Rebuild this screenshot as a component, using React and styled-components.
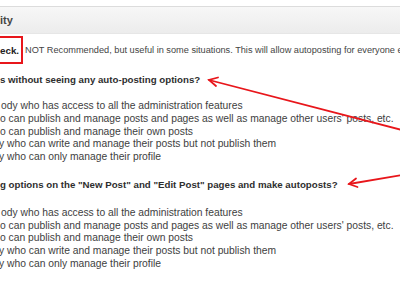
import React from "react"
import styled, { createGlobalStyle } from "styled-components"

const GlobalStyle = createGlobalStyle`
  html, body {
    margin: 0;
    padding: 0;
    background: #fff;
    overflow: hidden;
  }
  body {
    font-family: "Liberation Sans", Arial, sans-serif;
  }
`

const Page = styled.div`
  position: relative;
  width: 400px;
  height: 284px;
  overflow: hidden;
  padding-top: 6px;
  box-sizing: border-box;
`

const BoxHeader = styled.div`
  height: 26px;
  border-top: 1px solid #dcdcdc;
  border-bottom: 1px solid #e6e6e6;
  background: linear-gradient(to bottom, #f7f7f7, #ececec);
  display: flex;
  align-items: center;
  font-size: 11px;
  font-weight: bold;
  color: #464646;
  white-space: nowrap;
`

const Inside = styled.div`
  white-space: nowrap;
  color: #333;
`

const CheckRow = styled.div`
  margin-top: 2px;
  display: flex;
  align-items: center;
  height: 28px;
`

const Marked = styled.span`
  display: inline-flex;
  align-items: center;
  box-sizing: border-box;
  height: 28px;
  padding: 0 2px 0 0;
  border: 2px solid #e8161b;
  border-left: none;
  font-size: 9.8px;
  font-weight: bold;
  color: #222;
`

const Note = styled.span`
  margin-left: 2px;
  font-size: 9.2px;
  color: #444;
`

const Question = styled.div`
  margin-top: ${(p) => p.$top}px;
  font-size: 9.7px;
  line-height: 13px;
  font-weight: bold;
  color: #2e2e2e;
`

const RoleList = styled.ul`
  list-style: none;
  margin: ${(p) => p.$top}px 0 0 0;
  padding: 0;
`

const Role = styled.li`
  font-size: 10.3px;
  line-height: 12.75px;
  color: #3e3e3e;
  margin-left: ${(p) => p.$shift || 0}px;
`

const Arrows = styled.svg`
  position: absolute;
  left: 0;
  top: 0;
  pointer-events: none;
`

const roles = [
  { text: "ody who has access to all the administration features", shift: 1 },
  { text: "o can publish and manage posts and pages as well as manage other users' posts, etc.", shift: 0 },
  { text: "o can publish and manage their own posts", shift: 0 },
  { text: "y who can write and manage their posts but not publish them", shift: -1 },
  { text: "y who can only manage their profile", shift: -1 },
]

const Roles = ({ top }) => (
  <RoleList $top={top}>
    {roles.map((r) => (
      <Role key={r.text} $shift={r.shift}>
        {r.text}
      </Role>
    ))}
  </RoleList>
)

const App = () => (
  <Page>
    <GlobalStyle />
    <BoxHeader>ity</BoxHeader>
    <Inside>
      <CheckRow>
        <Marked>eck.</Marked>
        <Note>
          NOT Recommended, but useful in some situations. This will allow autoposting for everyone even
        </Note>
      </CheckRow>
      <Question $top={9}>s without seeing any auto-posting options?</Question>
      <Roles top={14} />
      <Question $top={14}>
        g options on the "New Post" and "Edit Post" pages and make autoposts?
      </Question>
      <Roles top={16} />
    </Inside>
    <Arrows width="400" height="284" viewBox="0 0 400 284">
      <g stroke="#e8161b" strokeWidth="1.8" fill="none" strokeLinecap="round">
        <line x1="402" y1="130" x2="209" y2="80" />
        <polyline points="218,77.5 209,80 216,86" />
        <line x1="402" y1="175" x2="349" y2="184" />
        <polyline points="356,178.5 349,184 357.5,187" />
      </g>
    </Arrows>
  </Page>
)

export default App
